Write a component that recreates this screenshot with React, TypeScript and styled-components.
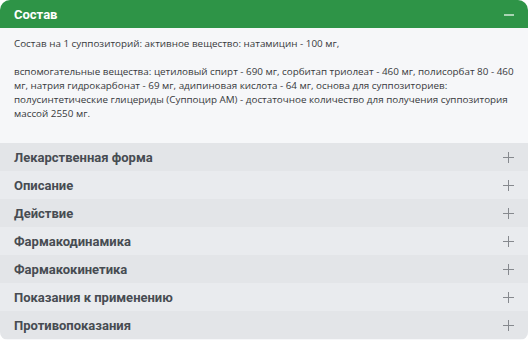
import React from "react";
import styled, { createGlobalStyle } from "styled-components";

const GlobalStyle = createGlobalStyle`
  html, body {
    margin: 0;
    padding: 0;
    background: #fff;
  }
  body {
    font-family: "Open Sans", "Noto Sans", sans-serif;
  }
`;

const sections = [
  "Лекарственная форма",
  "Описание",
  "Действие",
  "Фармакодинамика",
  "Фармакокинетика",
  "Показания к применению",
  "Противопоказания",
];

export default function App() {
  return (
    <>
      <GlobalStyle />
      <Accordion>
        <OpenHeader>
          <HeaderTitle>Состав</HeaderTitle>
          <Minus />
        </OpenHeader>
        <Body>
          <Paragraph>
            Состав на 1 суппозиторий: активное вещество: натамицин - 100 мг,
          </Paragraph>
          <Paragraph>
            вспомогательные вещества: цетиловый спирт - 690 мг, сорбитап
            триолеат - 460 мг, полисорбат 80 - 460 мг, натрия гидрокарбонат -
            69 мг, адипиновая кислота - 64 мг, основа для суппозиториев:
            полусинтетические глицериды (Суппоцир АМ) - достаточное количество
            для получения суппозитория массой 2550 мг.
          </Paragraph>
        </Body>
        {sections.map((title, i) => (
          <Row key={title} $odd={i % 2 === 1}>
            <RowTitle>{title}</RowTitle>
            <PlusIcon />
          </Row>
        ))}
      </Accordion>
    </>
  );
}

function PlusIcon() {
  return (
    <svg width="11" height="11" viewBox="0 0 11 11">
      <path d="M5.5 0v11M0 5.5h11" stroke="#86898e" strokeWidth="1" />
    </svg>
  );
}

const Accordion = styled.div`
  width: 528px;
  height: 340px;
  border-radius: 10px 10px 8px 8px;
  overflow: hidden;
  background: #f6f7f9;
  display: flex;
  flex-direction: column;
`;

const OpenHeader = styled.div`
  height: 28px;
  background: #2e9447;
  display: flex;
  align-items: center;
  justify-content: space-between;
  padding: 0 14px 0 14px;
  box-sizing: border-box;
`;

const HeaderTitle = styled.span`
  color: #fff;
  font-family: Roboto, "Open Sans", sans-serif;
  font-weight: 700;
  font-size: 13px;
`;

const Minus = styled.span`
  width: 10px;
  height: 2px;
  background: #a9d4b3;
  margin-top: 1px;
`;

const Body = styled.div`
  padding: 8px 8px 7px 14px;
  height: 115px;
  box-sizing: border-box;
`;

const Paragraph = styled.p`
  margin: 0 0 14px;
  font-size: 9.85px;
  line-height: 14px;
  color: #36393c;

  &:last-child {
    margin-bottom: 0;
  }
`;

const Row = styled.div<{ $odd: boolean }>`
  height: 28px;
  flex: none;
  background: ${(p) => (p.$odd ? "#e9ebee" : "#e3e5e8")};
  display: flex;
  align-items: center;
  justify-content: space-between;
  padding: 0 14px;
  box-sizing: border-box;
`;

const RowTitle = styled.span`
  color: #474c52;
  font-family: Roboto, "Open Sans", sans-serif;
  font-weight: 700;
  font-size: 13px;
`;
